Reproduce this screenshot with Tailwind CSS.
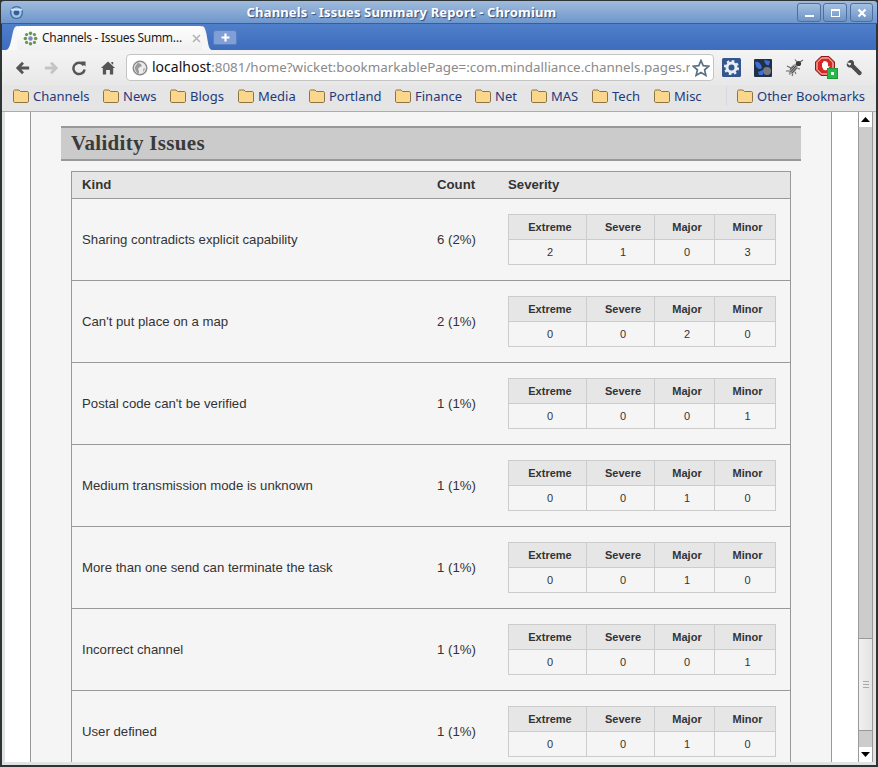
<!DOCTYPE html>
<html>
<head>
<meta charset="utf-8">
<script src="https://cdn.jsdelivr.net/npm/@tailwindcss/browser@4"></script>
</head>
<body class="m-0 bg-[#2e3436]">
<div class="w-[878px] h-[767px] overflow-hidden flex flex-col bg-[#2e3436] font-['Liberation_Sans',sans-serif]">
  <!-- title bar -->
  <div class="h-[23px] mt-px mx-px shrink-0 flex items-center rounded-t-[3px] bg-linear-to-b from-[#9fbbdc] to-[#6f97cc] border-b border-[#3b5f94]">
    <svg class="ml-[8px] w-[15px] h-[15px]" viewBox="0 0 16 16"><circle cx="8" cy="8" r="7" fill="#3f6fa8"/><circle cx="8" cy="8" r="5.5" fill="#a9c4e4"/><circle cx="8" cy="8" r="3" fill="#2f5f9e"/><path d="M2 5 L8 5 L14 5" stroke="#d5e2f2" stroke-width="2"/></svg>
    <div class="flex-1 text-center text-[13px] font-bold text-white tracking-[0.15px] font-['Noto_Sans',sans-serif] [text-shadow:1px_1px_1px_#2c4a78] pr-[18px] pt-px">Channels - Issues Summary Report - Chromium</div>
    <div class="flex gap-[2px] mr-[4px] mt-[1px]">
      <div class="w-[24px] h-[19px] rounded-[3px] border border-[#4c6f9f] bg-linear-to-b from-[#a5c0df] to-[#6d94c6] flex items-end justify-center pb-[4px]"><div class="w-[9px] h-[2px] bg-white"></div></div>
      <div class="w-[24px] h-[19px] rounded-[3px] border border-[#4c6f9f] bg-linear-to-b from-[#a5c0df] to-[#6d94c6] flex items-center justify-center"><div class="w-[9px] h-[8px] border border-white border-t-2"></div></div>
      <div class="ml-px w-[23px] h-[19px] rounded-[3px] border border-[#4c6f9f] bg-linear-to-b from-[#a5c0df] to-[#6d94c6] flex items-center justify-center"><svg class="w-[10px] h-[10px]" viewBox="0 0 10 10"><path d="M1.5 1.5 L8.5 8.5 M8.5 1.5 L1.5 8.5" stroke="#fff" stroke-width="2.2"/></svg></div>
    </div>
  </div>
  <div class="flex-1 min-h-0 mx-[2px] flex flex-col bg-[#dcdcdc]">
    <!-- tab strip -->
    <div class="h-[26px] shrink-0 bg-linear-to-b from-[#4f7fcb] to-[#3f6cbd] flex items-end pl-[4px]">
      <svg class="w-[12px] h-[24px] -mr-px" viewBox="0 0 12 24"><path d="M0 24 C4 24 5 14 7 6 C8 2 9 0 12 0 L12 24Z" fill="#f8f8f8"/></svg>
      <div class="w-[186px] h-[24px] bg-linear-to-b from-[#fdfdfd] to-[#f0f0f0] rounded-t-[3px] flex items-center pl-[6px]">
        <svg class="w-[15px] h-[15px] shrink-0" viewBox="0 0 16 16"><circle cx="8" cy="8" r="2.4" fill="#8a7fc0"/><g fill="#5f9a4f"><circle cx="8" cy="2.5" r="1.9"/><circle cx="8" cy="13.5" r="1.9"/><circle cx="2.5" cy="8" r="1.9"/><circle cx="13.5" cy="8" r="1.9"/><circle cx="3.8" cy="3.8" r="1.7"/><circle cx="12.2" cy="3.8" r="1.7"/><circle cx="3.8" cy="12.2" r="1.7"/><circle cx="12.2" cy="12.2" r="1.7"/></g></svg>
        <span class="ml-[4px] text-[12px] tracking-[-0.3px] text-[#1a1a1a] whitespace-nowrap font-['Noto_Sans',sans-serif] leading-none">Channels - Issues Summ…</span>
        <svg class="w-[9px] h-[9px] ml-auto mr-[2px]" viewBox="0 0 9 9"><path d="M1 1 L8 8 M8 1 L1 8" stroke="#b4b4b4" stroke-width="1.6"/></svg>
      </div>
      <svg class="w-[10px] h-[24px] -ml-px" viewBox="0 0 10 24"><path d="M10 24 C6 24 6 14 4 6 C3 2 2 0 0 0 L0 24Z" fill="#f6f6f6"/></svg>
      <div class="ml-px mb-[5px] w-[24px] h-[15px] rounded-t-[3px] rounded-b-[2px] bg-[#7f9fd6] border border-[#5b80c0] flex items-center justify-center text-white"><svg class="w-[9px] h-[9px]" viewBox="0 0 9 9"><path d="M4.5 0.5 V8.5 M0.5 4.5 H8.5" stroke="#fff" stroke-width="2.2"/></svg></div>
    </div>
    <!-- toolbar -->
    <div class="h-[35px] shrink-0 bg-linear-to-b from-[#f4f4f4] to-[#e8e8e8] flex items-center pl-[13px]">
      <svg class="w-[16px] h-[16px]" viewBox="0 0 17 17"><path d="M15 8.5 H5 M8.5 3 L3 8.5 L8.5 14" fill="none" stroke="#555" stroke-width="3"/></svg>
      <svg class="w-[16px] h-[16px] ml-[12px]" viewBox="0 0 17 17"><path d="M2 8.5 H12 M8.5 3 L14 8.5 L8.5 14" fill="none" stroke="#c4c4c4" stroke-width="3"/></svg>
      <svg class="w-[16px] h-[16px] ml-[12px]" viewBox="0 0 17 17"><path d="M13.5 5.5 A6 6 0 1 0 14.5 10" fill="none" stroke="#555" stroke-width="2.6"/><path d="M10 1.5 L15.5 1.5 L15.5 7 Z" fill="#555"/></svg>
      <svg class="w-[16px] h-[16px] ml-[13px]" viewBox="0 0 17 17"><path d="M8.5 1.5 L16 8.5 L14 8.5 L14 15.5 L10.5 15.5 L10.5 10.5 L6.5 10.5 L6.5 15.5 L3 15.5 L3 8.5 L1 8.5Z M12 2 H14 V5 L12 3.5Z" fill="#555"/></svg>
      <div class="ml-[10px] w-[588px] h-[27px] rounded-[4px] border border-[#c4c4c4] bg-white flex items-center pl-[5px] pr-[3px] overflow-hidden">
        <svg class="w-[16px] h-[16px] shrink-0" viewBox="0 0 17 17"><circle cx="8.5" cy="8.5" r="7.2" fill="#ececec" stroke="#8c8c8c" stroke-width="1.6"/><path d="M6 3 C9 4 11 5 10 7 C8 8 6 8 7 11 C8 13 7 14 7 15 C4 13 3 10 3 8 C4 6 5 5 6 3Z M12 9 L14 9 L12 13Z" fill="#9a9a9a"/></svg>
        <div class="ml-[4px] w-[538px] overflow-hidden whitespace-nowrap text-[13.4px] leading-none text-[#8a8a8a] font-['Noto_Sans',sans-serif]"><span class="text-[14px] text-[#111]">localhost</span>:8081/home?wicket:bookmarkablePage=:com.mindalliance.channels.pages.r</div>
        <svg class="w-[18px] h-[18px] shrink-0 ml-auto" viewBox="0 0 18 18"><path d="M9 1.5 L11.2 6.7 L16.8 7.2 L12.6 10.9 L13.9 16.4 L9 13.5 L4.1 16.4 L5.4 10.9 L1.2 7.2 L6.8 6.7Z" fill="#fff" stroke="#5a7184" stroke-width="1.7"/></svg>
      </div>
      <svg class="ml-[8px] w-[19px] h-[19px]" viewBox="0 0 19 19"><rect width="19" height="19" rx="1.5" fill="#33568f"/><circle cx="9.5" cy="9.5" r="4.5" fill="none" stroke="#e8eef6" stroke-width="3"/><circle cx="9.5" cy="9.5" r="6.6" fill="none" stroke="#e8eef6" stroke-width="2" stroke-dasharray="2.6 2.6"/></svg>
      <svg class="ml-[13px] w-[18px] h-[18px]" viewBox="0 0 18 18"><rect width="18" height="18" rx="1" fill="#223043"/><path d="M1 3 C5 2 7 5 8 9 C6 11 3 10 2 7Z M10 1 L16 2 L15 6 C13 7 11 5 10 1Z M4 13 L9 11 L9 16 L5 16Z" fill="#3f6fd6"/><circle cx="13" cy="12" r="4" fill="#767a80"/></svg>
      <svg class="ml-[13px] w-[20px] h-[20px]" viewBox="0 0 20 20"><path d="M4 17 C3 12 6 7 12 5 C14 9 11 15 4 17Z" fill="#9a9a9a"/><path d="M5.5 14 L11 8 M7 15 L12 9.5 M5 11.5 L9 8" stroke="#4a4a4a" stroke-width="1"/><circle cx="13.5" cy="5.5" r="2.6" fill="#3a3a3a"/><path d="M2 8 L6 10 M1 13 L4 13 M7 18 L8 15.5 M11 16 L10 14 M15 11 L12.5 10.5 M10 1.5 L12 4 M18 2 L15 4" stroke="#666" stroke-width="1.1" fill="none"/></svg>
      <div class="ml-[10px] w-[24px] h-[26px] relative">
        <svg class="w-[20px] h-[20px] mt-[1px]" viewBox="0 0 20 20"><path d="M6 0.5 H14 L19.5 6 V14 L14 19.5 H6 L0.5 14 V6Z" fill="#d42a24" stroke="#8d1a17"/><path d="M6.6 2 H13.4 L18 6.6 V13.4 L13.4 18 H6.6 L2 13.4 V6.6Z" fill="none" stroke="#f7e4e3" stroke-width="1"/><path d="M7 10.5 V7 H8 V5.6 H9.2 V5 H10.6 V5.6 H11.8 V6.6 H13 V10.8 L14.2 9.8 L14.6 10.6 L12.6 13.6 C11.8 14.4 9 14.4 8.2 13.2Z" fill="#fff"/></svg>
        <div class="absolute left-[12px] top-[13px] w-[11px] h-[11px] bg-[#27b84a] border border-[#1c9a3a] flex items-center justify-center"><div class="w-[3px] h-[3px] bg-white"></div></div>
      </div>
      <svg class="ml-[6px] w-[18px] h-[18px]" viewBox="0 0 18 18"><path d="M2 3.5 L5 1 C8 0.5 9.5 2.5 9 5.5 L16.5 13 C17.5 14.5 15.5 17 13.5 16 L6 8.5 C3 9 1 7 2 4 L4.5 6.5 L6 5.5 L6 4 Z" fill="#4d4d4d"/></svg>
    </div>
    <!-- bookmarks -->
    <div class="h-[27px] shrink-0 bg-[#e5e5e5] border-b border-[#a9adb3] flex items-center pl-[11px] pb-[4px] text-[13px] text-[#1f3a7a] font-['Noto_Sans',sans-serif] leading-none whitespace-nowrap">
      <svg class="w-[16px] h-[14px] shrink-0" viewBox="0 0 16 14"><path d="M0.5 12 V2.5 C0.5 1.5 1 1 2 1 H6 L7.5 2.5 H14 C15 2.5 15.5 3 15.5 4 V12 C15.5 13 15 13.5 14 13.5 H2 C1 13.5 0.5 13 0.5 12Z" fill="#fbd78e" stroke="#8c7443"/></svg>
      <span class="ml-[4px] w-[70px]">Channels</span>
      <svg class="w-[16px] h-[14px] shrink-0" viewBox="0 0 16 14"><path d="M0.5 12 V2.5 C0.5 1.5 1 1 2 1 H6 L7.5 2.5 H14 C15 2.5 15.5 3 15.5 4 V12 C15.5 13 15 13.5 14 13.5 H2 C1 13.5 0.5 13 0.5 12Z" fill="#fbd78e" stroke="#8c7443"/></svg>
      <span class="ml-[4px] w-[47px]">News</span>
      <svg class="w-[16px] h-[14px] shrink-0" viewBox="0 0 16 14"><path d="M0.5 12 V2.5 C0.5 1.5 1 1 2 1 H6 L7.5 2.5 H14 C15 2.5 15.5 3 15.5 4 V12 C15.5 13 15 13.5 14 13.5 H2 C1 13.5 0.5 13 0.5 12Z" fill="#fbd78e" stroke="#8c7443"/></svg>
      <span class="ml-[4px] w-[48px]">Blogs</span>
      <svg class="w-[16px] h-[14px] shrink-0" viewBox="0 0 16 14"><path d="M0.5 12 V2.5 C0.5 1.5 1 1 2 1 H6 L7.5 2.5 H14 C15 2.5 15.5 3 15.5 4 V12 C15.5 13 15 13.5 14 13.5 H2 C1 13.5 0.5 13 0.5 12Z" fill="#fbd78e" stroke="#8c7443"/></svg>
      <span class="ml-[4px] w-[51px]">Media</span>
      <svg class="w-[16px] h-[14px] shrink-0" viewBox="0 0 16 14"><path d="M0.5 12 V2.5 C0.5 1.5 1 1 2 1 H6 L7.5 2.5 H14 C15 2.5 15.5 3 15.5 4 V12 C15.5 13 15 13.5 14 13.5 H2 C1 13.5 0.5 13 0.5 12Z" fill="#fbd78e" stroke="#8c7443"/></svg>
      <span class="ml-[4px] w-[66px]">Portland</span>
      <svg class="w-[16px] h-[14px] shrink-0" viewBox="0 0 16 14"><path d="M0.5 12 V2.5 C0.5 1.5 1 1 2 1 H6 L7.5 2.5 H14 C15 2.5 15.5 3 15.5 4 V12 C15.5 13 15 13.5 14 13.5 H2 C1 13.5 0.5 13 0.5 12Z" fill="#fbd78e" stroke="#8c7443"/></svg>
      <span class="ml-[4px] w-[60px]">Finance</span>
      <svg class="w-[16px] h-[14px] shrink-0" viewBox="0 0 16 14"><path d="M0.5 12 V2.5 C0.5 1.5 1 1 2 1 H6 L7.5 2.5 H14 C15 2.5 15.5 3 15.5 4 V12 C15.5 13 15 13.5 14 13.5 H2 C1 13.5 0.5 13 0.5 12Z" fill="#fbd78e" stroke="#8c7443"/></svg>
      <span class="ml-[4px] w-[36px]">Net</span>
      <svg class="w-[16px] h-[14px] shrink-0" viewBox="0 0 16 14"><path d="M0.5 12 V2.5 C0.5 1.5 1 1 2 1 H6 L7.5 2.5 H14 C15 2.5 15.5 3 15.5 4 V12 C15.5 13 15 13.5 14 13.5 H2 C1 13.5 0.5 13 0.5 12Z" fill="#fbd78e" stroke="#8c7443"/></svg>
      <span class="ml-[4px] w-[41px]">MAS</span>
      <svg class="w-[16px] h-[14px] shrink-0" viewBox="0 0 16 14"><path d="M0.5 12 V2.5 C0.5 1.5 1 1 2 1 H6 L7.5 2.5 H14 C15 2.5 15.5 3 15.5 4 V12 C15.5 13 15 13.5 14 13.5 H2 C1 13.5 0.5 13 0.5 12Z" fill="#fbd78e" stroke="#8c7443"/></svg>
      <span class="ml-[4px] w-[42px]">Tech</span>
      <svg class="w-[16px] h-[14px] shrink-0" viewBox="0 0 16 14"><path d="M0.5 12 V2.5 C0.5 1.5 1 1 2 1 H6 L7.5 2.5 H14 C15 2.5 15.5 3 15.5 4 V12 C15.5 13 15 13.5 14 13.5 H2 C1 13.5 0.5 13 0.5 12Z" fill="#fbd78e" stroke="#8c7443"/></svg>
      <span class="ml-[4px] w-[52px]">Misc</span>
      <div class="w-px h-[20px] bg-[#d3d8e4]"></div>
      <svg class="ml-[10px] w-[16px] h-[14px] shrink-0" viewBox="0 0 16 14"><path d="M0.5 12 V2.5 C0.5 1.5 1 1 2 1 H6 L7.5 2.5 H14 C15 2.5 15.5 3 15.5 4 V12 C15.5 13 15 13.5 14 13.5 H2 C1 13.5 0.5 13 0.5 12Z" fill="#fbd78e" stroke="#8c7443"/></svg>
      <span class="ml-[4px]">Other Bookmarks</span>
    </div>
    <!-- viewport -->
    <div class="flex-1 min-h-0 flex bg-white overflow-hidden">
      <div class="w-[3px] shrink-0 bg-[#e2e2e2]"></div>
      <div class="w-[853px] shrink-0 overflow-hidden pl-[25px] pr-[25px]">
        <div class="w-[802px] h-full border-x border-[#999] bg-[#f5f5f5] px-[30px] pt-[14px] text-[#333]">
          <h2 class="h-[35px] border-y-2 border-[#999] bg-[#cbcbcb] pl-[10px] flex items-center font-['Liberation_Serif',serif] font-bold text-[21px] tracking-[0.3px] text-[#3a3a3a]">Validity Issues</h2>
          <div class="mt-[10px] mx-[10px] w-[720px] border-x border-t border-[#999] text-[13.2px]">
            <div class="h-[27px] bg-[#e6e6e6] border-b border-[#999] flex items-center font-bold pl-[10px]"><span class="w-[355px]">Kind</span><span class="w-[71px]">Count</span><span>Severity</span></div>

            <div class="h-[82px] border-b border-[#999] flex items-center pl-[10px]"><span class="w-[355px]">Sharing contradicts explicit capability</span><span class="w-[71px]">6 (2%)</span>
              <div class="w-[268px] h-[51px] grid grid-cols-[78px_68px_60px_61px] grid-rows-[25px_25px] border-l border-t border-[#ccc] text-[11px] text-center leading-[24px] [&>*]:pl-[5px]"><b class="bg-[#e6e6e6] border-r border-b border-[#ccc]">Extreme</b><b class="bg-[#e6e6e6] border-r border-b border-[#ccc]">Severe</b><b class="bg-[#e6e6e6] border-r border-b border-[#ccc]">Major</b><b class="bg-[#e6e6e6] border-r border-b border-[#ccc]">Minor</b><span class="border-r border-b border-[#ccc]">2</span><span class="border-r border-b border-[#ccc]">1</span><span class="border-r border-b border-[#ccc]">0</span><span class="border-r border-b border-[#ccc]">3</span></div></div>

            <div class="h-[82px] border-b border-[#999] flex items-center pl-[10px]"><span class="w-[355px]">Can't put place on a map</span><span class="w-[71px]">2 (1%)</span>
              <div class="w-[268px] h-[51px] grid grid-cols-[78px_68px_60px_61px] grid-rows-[25px_25px] border-l border-t border-[#ccc] text-[11px] text-center leading-[24px] [&>*]:pl-[5px]"><b class="bg-[#e6e6e6] border-r border-b border-[#ccc]">Extreme</b><b class="bg-[#e6e6e6] border-r border-b border-[#ccc]">Severe</b><b class="bg-[#e6e6e6] border-r border-b border-[#ccc]">Major</b><b class="bg-[#e6e6e6] border-r border-b border-[#ccc]">Minor</b><span class="border-r border-b border-[#ccc]">0</span><span class="border-r border-b border-[#ccc]">0</span><span class="border-r border-b border-[#ccc]">2</span><span class="border-r border-b border-[#ccc]">0</span></div></div>

            <div class="h-[82px] border-b border-[#999] flex items-center pl-[10px]"><span class="w-[355px]">Postal code can't be verified</span><span class="w-[71px]">1 (1%)</span>
              <div class="w-[268px] h-[51px] grid grid-cols-[78px_68px_60px_61px] grid-rows-[25px_25px] border-l border-t border-[#ccc] text-[11px] text-center leading-[24px] [&>*]:pl-[5px]"><b class="bg-[#e6e6e6] border-r border-b border-[#ccc]">Extreme</b><b class="bg-[#e6e6e6] border-r border-b border-[#ccc]">Severe</b><b class="bg-[#e6e6e6] border-r border-b border-[#ccc]">Major</b><b class="bg-[#e6e6e6] border-r border-b border-[#ccc]">Minor</b><span class="border-r border-b border-[#ccc]">0</span><span class="border-r border-b border-[#ccc]">0</span><span class="border-r border-b border-[#ccc]">0</span><span class="border-r border-b border-[#ccc]">1</span></div></div>

            <div class="h-[82px] border-b border-[#999] flex items-center pl-[10px]"><span class="w-[355px]">Medium transmission mode is unknown</span><span class="w-[71px]">1 (1%)</span>
              <div class="w-[268px] h-[51px] grid grid-cols-[78px_68px_60px_61px] grid-rows-[25px_25px] border-l border-t border-[#ccc] text-[11px] text-center leading-[24px] [&>*]:pl-[5px]"><b class="bg-[#e6e6e6] border-r border-b border-[#ccc]">Extreme</b><b class="bg-[#e6e6e6] border-r border-b border-[#ccc]">Severe</b><b class="bg-[#e6e6e6] border-r border-b border-[#ccc]">Major</b><b class="bg-[#e6e6e6] border-r border-b border-[#ccc]">Minor</b><span class="border-r border-b border-[#ccc]">0</span><span class="border-r border-b border-[#ccc]">0</span><span class="border-r border-b border-[#ccc]">1</span><span class="border-r border-b border-[#ccc]">0</span></div></div>

            <div class="h-[82px] border-b border-[#999] flex items-center pl-[10px]"><span class="w-[355px]">More than one send can terminate the task</span><span class="w-[71px]">1 (1%)</span>
              <div class="w-[268px] h-[51px] grid grid-cols-[78px_68px_60px_61px] grid-rows-[25px_25px] border-l border-t border-[#ccc] text-[11px] text-center leading-[24px] [&>*]:pl-[5px]"><b class="bg-[#e6e6e6] border-r border-b border-[#ccc]">Extreme</b><b class="bg-[#e6e6e6] border-r border-b border-[#ccc]">Severe</b><b class="bg-[#e6e6e6] border-r border-b border-[#ccc]">Major</b><b class="bg-[#e6e6e6] border-r border-b border-[#ccc]">Minor</b><span class="border-r border-b border-[#ccc]">0</span><span class="border-r border-b border-[#ccc]">0</span><span class="border-r border-b border-[#ccc]">1</span><span class="border-r border-b border-[#ccc]">0</span></div></div>

            <div class="h-[82px] border-b border-[#999] flex items-center pl-[10px]"><span class="w-[355px]">Incorrect channel</span><span class="w-[71px]">1 (1%)</span>
              <div class="w-[268px] h-[51px] grid grid-cols-[78px_68px_60px_61px] grid-rows-[25px_25px] border-l border-t border-[#ccc] text-[11px] text-center leading-[24px] [&>*]:pl-[5px]"><b class="bg-[#e6e6e6] border-r border-b border-[#ccc]">Extreme</b><b class="bg-[#e6e6e6] border-r border-b border-[#ccc]">Severe</b><b class="bg-[#e6e6e6] border-r border-b border-[#ccc]">Major</b><b class="bg-[#e6e6e6] border-r border-b border-[#ccc]">Minor</b><span class="border-r border-b border-[#ccc]">0</span><span class="border-r border-b border-[#ccc]">0</span><span class="border-r border-b border-[#ccc]">0</span><span class="border-r border-b border-[#ccc]">1</span></div></div>

            <div class="h-[82px] border-b border-transparent flex items-center pl-[10px]"><span class="w-[355px]">User defined</span><span class="w-[71px]">1 (1%)</span>
              <div class="w-[268px] h-[51px] grid grid-cols-[78px_68px_60px_61px] grid-rows-[25px_25px] border-l border-t border-[#ccc] text-[11px] text-center leading-[24px] [&>*]:pl-[5px]"><b class="bg-[#e6e6e6] border-r border-b border-[#ccc]">Extreme</b><b class="bg-[#e6e6e6] border-r border-b border-[#ccc]">Severe</b><b class="bg-[#e6e6e6] border-r border-b border-[#ccc]">Major</b><b class="bg-[#e6e6e6] border-r border-b border-[#ccc]">Minor</b><span class="border-r border-b border-[#ccc]">0</span><span class="border-r border-b border-[#ccc]">0</span><span class="border-r border-b border-[#ccc]">1</span><span class="border-r border-b border-[#ccc]">0</span></div></div>
          </div>
        </div>
      </div>
      <!-- scrollbar -->
      <div class="w-[15px] shrink-0 flex flex-col border-x border-[#999]">
        <div class="h-[15px] shrink-0 bg-white rounded-t-[3px] flex items-center justify-center"><svg class="w-[9px] h-[5px]" viewBox="0 0 9 5"><path d="M4.5 0 L9 5 H0Z" fill="#000"/></svg></div>
        <div class="flex-1 bg-[#cccccc] border-b border-[#999]"></div>
        <div class="h-[92px] shrink-0 bg-linear-to-r from-[#f0f0f0] to-[#e4e4e4] border-b border-[#999] flex flex-col items-center justify-center gap-[2px]"><div class="w-[6px] h-px bg-[#aaa]"></div><div class="w-[6px] h-px bg-[#aaa]"></div><div class="w-[6px] h-px bg-[#aaa]"></div></div>
        <div class="h-[16px] shrink-0 bg-[#cccccc]"></div>
        <div class="h-[15px] shrink-0 bg-white rounded-b-[3px] flex items-center justify-center"><svg class="w-[9px] h-[5px]" viewBox="0 0 9 5"><path d="M0 0 H9 L4.5 5Z" fill="#000"/></svg></div>
      </div>
      <div class="w-[3px] shrink-0 bg-[#e2e2e2]"></div>
    </div>
    <div class="h-[3px] shrink-0 bg-[#e2e2e2]"></div>
  </div>
  <div class="h-[2px] shrink-0"></div>
</div>
</body>
</html>
